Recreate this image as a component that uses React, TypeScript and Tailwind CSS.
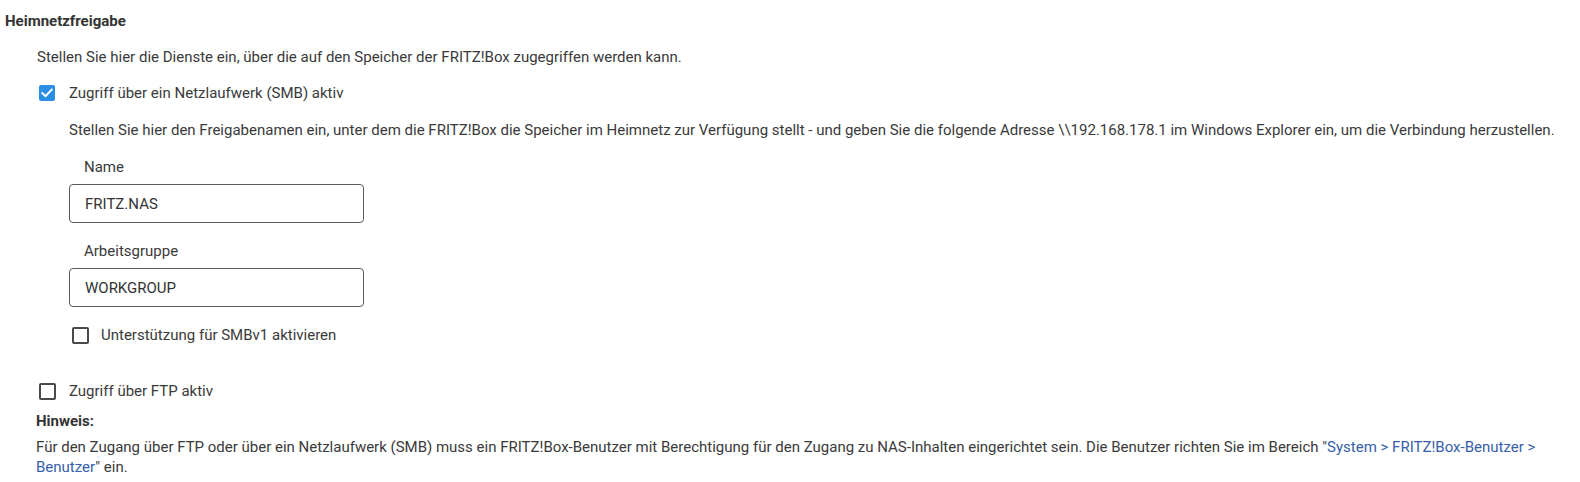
function CheckedBox() {
  return (
    <span className="flex h-[16px] w-[16px] shrink-0 items-center justify-center rounded-[2px] bg-[#2b8ee5]">
      <svg width="12" height="10" viewBox="0 0 12 10" fill="none">
        <path d="M1.3 5.2 L4.5 8.2 L10.7 1.6" stroke="#ffffff" strokeWidth="2" strokeLinecap="square" />
      </svg>
    </span>
  );
}

function EmptyBox() {
  return <span className="block h-[17px] w-[17px] shrink-0 rounded-[2px] border-[2px] border-[#4a4a4a] bg-white" />;
}

export default function App() {
  return (
    <div className="flex min-h-[482px] w-[1580px] flex-col bg-white pl-[5px] pt-[11px] text-[15px] leading-[20px] text-[#3a3a3a] [font-family:Roboto,'Liberation_Sans',sans-serif]">
      <h2 className="font-bold text-[#333333]">Heimnetzfreigabe</h2>
      <div className="flex flex-col pl-[32px]">
        <p className="mt-[16px]">
          Stellen Sie hier die Dienste ein, über die auf den Speicher der FRITZ!Box zugegriffen werden kann.
        </p>

        <label className="mt-[16px] flex items-center gap-[14px] pl-[2px]">
          <CheckedBox />
          <span>Zugriff über ein Netzlaufwerk (SMB) aktiv</span>
        </label>

        <div className="flex flex-col pl-[32px]">
          <p className="mt-[17px] whitespace-nowrap">
            Stellen Sie hier den Freigabenamen ein, unter dem die FRITZ!Box die Speicher im Heimnetz zur Verfügung stellt - und geben Sie die folgende Adresse \\192.168.178.1 im Windows Explorer ein, um die Verbindung herzustellen.
          </p>

          <span className="mt-[17px] pl-[15px]">Name</span>
          <div className="mt-[7px] flex h-[39px] w-[295px] items-center rounded-[4px] border border-[#5a5a5a] px-[15px] text-[#333333]">
            FRITZ.NAS
          </div>

          <span className="mt-[18px] pl-[15px]">Arbeitsgruppe</span>
          <div className="mt-[7px] flex h-[39px] w-[295px] items-center rounded-[4px] border border-[#5a5a5a] px-[15px] text-[#333333]">
            WORKGROUP
          </div>

          <label className="mt-[18px] flex items-center gap-[12px] pl-[3px]">
            <EmptyBox />
            <span>Unterstützung für SMBv1 aktivieren</span>
          </label>
        </div>

        <label className="mt-[36px] flex items-center gap-[13px] pl-[2px]">
          <EmptyBox />
          <span>Zugriff über FTP aktiv</span>
        </label>

        <p className="-ml-[1px] mt-[10px] font-bold text-[#333333]">Hinweis:</p>
        <p className="-ml-[1px] mt-[6px]">
          Für den Zugang über FTP oder über ein Netzlaufwerk (SMB) muss ein FRITZ!Box-Benutzer mit Berechtigung für den Zugang zu NAS-Inhalten eingerichtet sein. Die Benutzer richten Sie im Bereich "
          <a className="text-[#3660a8]">System &gt; FRITZ!Box-Benutzer &gt;</a>
          <br />
          <a className="text-[#3660a8]">Benutzer</a>" ein.
        </p>
      </div>
    </div>
  );
}
